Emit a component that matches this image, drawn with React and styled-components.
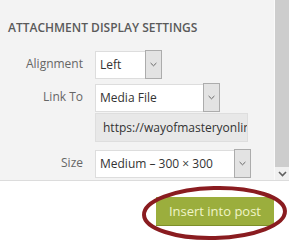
import React from "react";
import styled, { createGlobalStyle } from "styled-components";

const Global = createGlobalStyle`
  html, body { margin: 0; padding: 0; background: #ffffff; }
  body { font-family: "Open Sans", "Noto Sans", sans-serif; }
  * { box-sizing: border-box; }
`;

const Frame = styled.div`
  width: 289px;
  height: 242px;
  position: relative;
  overflow: hidden;
  background: #ffffff;
`;

const Upper = styled.div`
  display: flex;
  height: 181px;
  border-bottom: 1px solid #dcdcdc;
`;

const Panel = styled.div`
  flex: 1;
  background: #f3f3f3;
  padding: 20px 0 0 8px;
  overflow: hidden;
`;

const Scrollbar = styled.div`
  width: 15px;
  display: flex;
  flex-direction: column;
  border-left: 1px solid #fafafa;
`;

const ScrollTrack = styled.div`
  flex: 1;
  background: #cdcdcd;
`;

const ScrollButton = styled.div`
  height: 13px;
  background: #f0f0f0;
  display: flex;
  align-items: center;
  justify-content: center;
`;

const Heading = styled.h2`
  margin: 0 0 14px 0;
  font-size: 12px;
  line-height: 16.8px;
  font-weight: 600;
  text-transform: uppercase;
  color: #5a5a5a;
  white-space: nowrap;
`;

const Setting = styled.div`
  display: grid;
  grid-template-columns: 75px auto;
  column-gap: 12px;
  align-items: center;
  margin-top: ${(p) => p.$top || 0}px;
`;

const Label = styled.span`
  text-align: right;
  font-size: 12px;
  line-height: 16.8px;
  color: #666666;
`;

const Select = styled.div`
  display: flex;
  align-items: stretch;
  width: ${(p) => p.$width}px;
  height: 28px;
  background: #ffffff;
  border: 1px solid #dddddd;
  font-size: 12px;
  color: #333333;
`;

const SelectValue = styled.span`
  flex: 1;
  display: flex;
  align-items: center;
  padding-left: 4px;
  white-space: nowrap;
  overflow: hidden;
`;

const Arrow = styled.span`
  width: 17px;
  margin: -2px -1px -1px 0;
  background: #e3e3e3;
  border: 1px solid #acacac;
  display: flex;
  align-items: center;
  justify-content: center;
`;

const UrlField = styled.div`
  width: 153px;
  height: 29px;
  background: #e8e8e8;
  border: 1px solid #dedede;
  font-size: 12px;
  color: #333333;
  padding-left: 7px;
  display: flex;
  align-items: center;
  white-space: nowrap;
  overflow: hidden;
`;

const Footer = styled.div`
  display: flex;
  justify-content: flex-end;
  padding: 16px 15px 0 0;
`;

const InsertButton = styled.button`
  height: 29px;
  padding: 0 13px;
  border: none;
  border-bottom: 1px solid #7d8f2a;
  background: #9bae3d;
  color: #f0f5c8;
  font-family: "Open Sans", "Noto Sans", sans-serif;
  font-size: 13px;
  line-height: 28px;
  cursor: pointer;
`;

const Circle = styled.svg`
  position: absolute;
  left: 0;
  top: 0;
  pointer-events: none;
`;

const Chevron = ({ color = "#666" }) => (
  <svg width="7" height="5" viewBox="0 0 7 5">
    <path d="M0.6 1 L3.5 3.8 L6.4 1" fill="none" stroke={color} strokeWidth="1" />
  </svg>
);

export default function App() {
  return (
    <Frame>
      <Global />
      <Upper>
        <Panel>
          <Heading>Attachment Display Settings</Heading>
          <Setting>
            <Label>Alignment</Label>
            <Select $width={67}>
              <SelectValue>Left</SelectValue>
              <Arrow><Chevron /></Arrow>
            </Select>
          </Setting>
          <Setting $top={5}>
            <Label>Link To</Label>
            <Select $width={125}>
              <SelectValue>Media File</SelectValue>
              <Arrow><Chevron /></Arrow>
            </Select>
          </Setting>
          <Setting $top={1}>
            <span />
            <UrlField>https://wayofmasteryonline.com/wp-content/uploads/</UrlField>
          </Setting>
          <Setting $top={8}>
            <Label>Size</Label>
            <Select $width={156}>
              <SelectValue>Medium – 300 × 300</SelectValue>
              <Arrow><Chevron /></Arrow>
            </Select>
          </Setting>
        </Panel>
        <Scrollbar>
          <ScrollTrack />
          <ScrollButton>
            <svg width="9" height="6" viewBox="0 0 9 6">
              <path d="M1 1 L4.5 4.5 L8 1" fill="none" stroke="#606060" strokeWidth="1.6" />
            </svg>
          </ScrollButton>
        </Scrollbar>
      </Upper>
      <Footer>
        <InsertButton>Insert into post</InsertButton>
      </Footer>
      <Circle width="289" height="242" viewBox="0 0 289 242">
        <ellipse
          cx="214.5"
          cy="213"
          rx="70.5"
          ry="25"
          fill="none"
          stroke="#8a1c20"
          strokeWidth="4"
          transform="rotate(-1.5 214.5 213)"
        />
      </Circle>
    </Frame>
  );
}
